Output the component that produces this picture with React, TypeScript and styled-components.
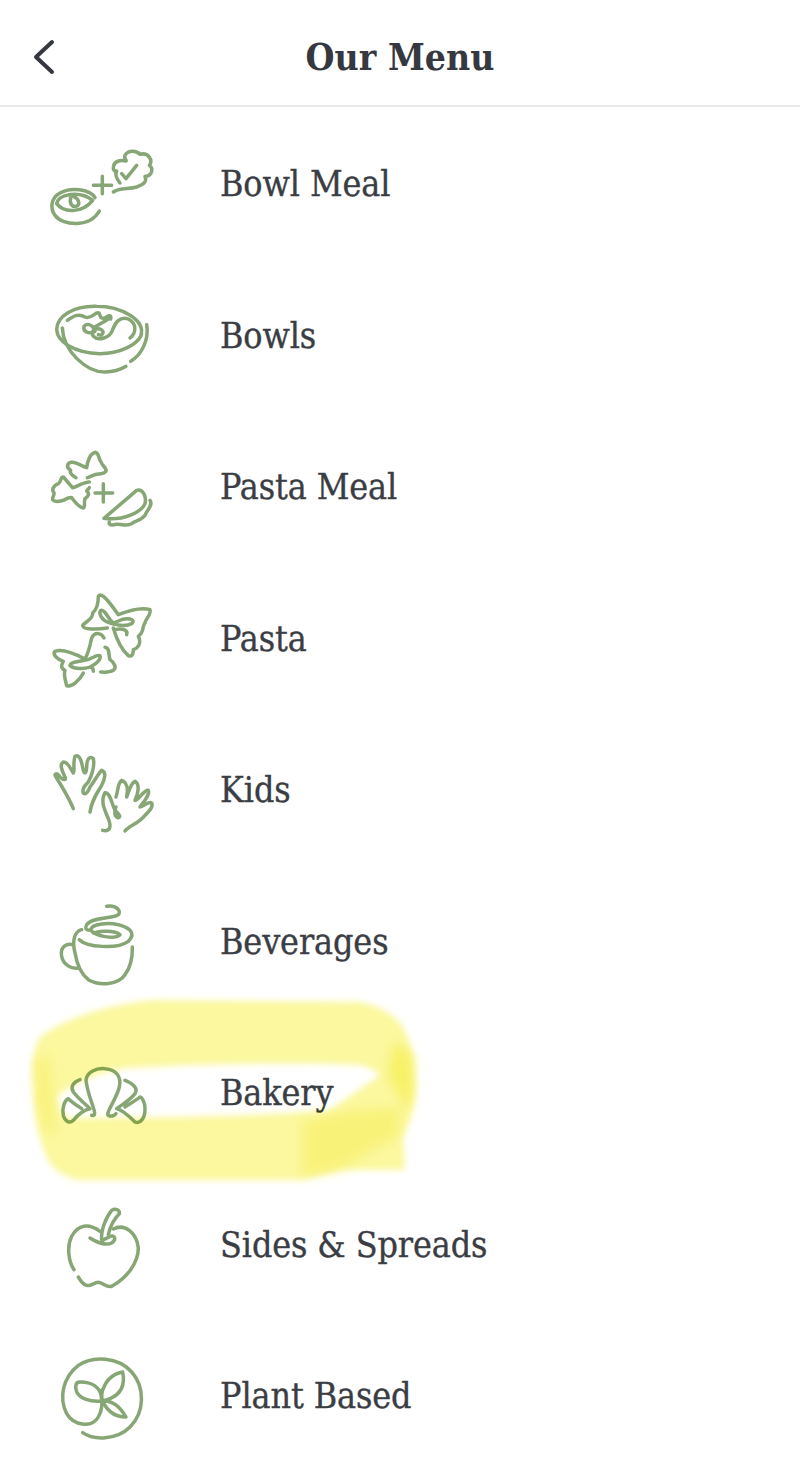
import React from 'react'
import styled, { createGlobalStyle } from 'styled-components'

const GlobalStyle = createGlobalStyle`
html, body {
    margin: 0;
    padding: 0;
    background: #ffffff;
}
`

type MenuItem = {
    name: string;
    viewBox: string;
    paths: string[];
}

// icon strokes are drawn on a 3x grid, the svg itself is 120x100
const menuItems: MenuItem[] = [
    {
        name: 'Bowl Meal',
        viewBox: '6 -22 360 300',
        paths: [
            'M165 172C150 145 90 140 60 158C35 172 28 200 45 225C70 258 150 262 178 212',
            'M50 190C55 160 120 150 158 180C130 215 75 222 50 190',
            'M92 172C88 190 95 200 108 198C122 195 118 175 100 168',
            'M160 135H215M187 108V160',
            'M220 155C240 140 265 148 290 140C310 133 322 125 315 108C335 108 342 85 328 75C340 60 325 35 300 42C290 30 265 28 255 45C250 55 262 60 258 62C240 58 222 62 220 80C218 90 228 95 230 92C222 105 232 118 240 128',
            'M245 100L258 115L290 75',
        ],
    },
    {
        name: 'Bowls',
        viewBox: '36 13 360 300',
        paths: [
            'M332 170C350 120 270 80 200 80C130 78 80 110 80 150C82 185 130 220 210 222C270 222 320 195 332 170',
            'M350 135C358 180 335 225 302 245',
            'M97 145C100 215 170 278 225 277C250 277 275 268 288 260',
            'M112 122C130 110 145 100 165 112C185 120 195 95 207 100C212 110 210 118 225 115C238 105 245 105 242 118',
            'M300 175C320 160 320 130 295 118C270 108 255 130 248 150C240 175 205 185 190 170C180 155 195 145 210 148C225 155 220 170 205 165',
            'M195 155C175 165 158 155 162 140C170 130 185 135 190 145C205 135 225 125 240 115',
        ],
    },
    {
        name: 'Pasta Meal',
        viewBox: '36 467 360 300',
        paths: [
            'M138 592C125 585 118 578 122 570C108 562 110 548 125 546C140 545 155 558 170 562C172 545 180 518 197 516C208 520 205 535 213 545C215 555 230 562 228 572C222 585 200 578 190 585C185 588 178 590 172 592',
            'M178 605C160 605 140 620 128 622C118 612 110 600 100 590C90 590 95 605 85 610C72 615 65 625 70 635C78 640 65 650 68 658C75 668 90 662 100 660C110 655 118 650 125 652C135 665 145 680 160 683C168 678 160 665 165 655C175 648 180 640 170 632C172 628 176 626 178 622',
            'M195 638H248M220 610V665',
            'M222 714L320 630C340 625 350 650 345 670C335 695 280 722 222 714',
            'M360 660C370 675 350 690 345 705C335 720 320 718 305 730C290 740 275 730 260 732C245 735 235 735 238 725',
        ],
    },
    {
        name: 'Pasta',
        viewBox: '36 22 360 300',
        paths: [
            'M232 145C200 150 160 150 158 138C165 125 190 120 188 100C200 90 205 70 205 50C215 35 240 70 265 105C290 95 330 80 360 90C365 105 345 120 345 130C335 140 345 155 325 170C335 190 325 205 310 210C310 225 305 232 295 228C275 210 260 180 250 145',
            'M250 130C235 120 225 88 212 92C205 100 215 122 235 128C255 135 285 142 305 132C320 118 290 112 265 124L250 130',
            'M255 150C275 145 295 150 290 165',
            'M222 175C215 160 195 155 185 175C180 200 175 220 165 238C140 225 100 205 75 215C65 225 85 240 100 245C95 255 90 265 105 272C100 285 105 295 110 318C125 325 150 300 160 280',
            'M190 275C190 268 188 262 180 262C195 255 215 240 210 228C200 222 185 240 165 242C145 245 120 248 120 258C135 270 165 268 180 262',
            'M225 203C240 205 235 225 240 240C255 250 260 265 250 272C240 278 225 278 212 277',
        ],
    },
    {
        name: 'Kids',
        viewBox: '36 476 360 300',
        paths: [
            'M130 685C120 660 100 625 78 590C70 580 80 575 90 590C100 600 110 600 105 590C95 570 88 550 100 545C115 545 125 570 130 578C135 575 128 545 135 528C150 520 155 545 160 570C165 585 170 575 170 560C170 535 180 525 190 535C195 560 185 585 175 605C165 615 155 625 160 638C170 645 175 630 180 620C195 600 205 580 215 570C230 575 225 595 215 615C200 640 185 660 180 695',
            'M285 752C295 738 325 730 345 705C360 690 370 680 365 668C355 660 340 680 330 680C340 665 360 645 355 630C345 625 320 665 315 660C325 640 330 610 315 603C300 610 295 640 290 650C295 625 290 605 275 600C262 610 265 630 258 650',
            'M218 750C240 755 245 740 235 715C225 690 210 665 225 637C240 635 245 670 255 690C265 700 275 710 265 712C255 710 250 695 258 680',
        ],
    },
    {
        name: 'Beverages',
        viewBox: '36 1 360 300',
        paths: [
            'M230 50C260 45 275 65 265 75C250 88 190 80 170 105C165 115 165 122 183 122',
            'M148 150C170 172 260 180 295 155C320 130 300 110 250 102C210 98 178 110 183 122C195 140 255 150 270 135C260 125 215 120 190 130',
            'M155 120C135 125 125 150 135 190C140 220 150 250 175 270C210 290 265 285 285 255C300 235 308 210 307 172',
            'M130 165C105 160 90 175 95 200C100 225 125 240 145 235',
        ],
    },
    {
        name: 'Bakery',
        viewBox: '96 185 360 300',
        paths: [
            'M245 405C270 410 235 360 228 300C230 275 260 262 285 265C320 268 335 290 328 320C320 355 285 400 295 405C305 410 315 405 318 400',
            'M210 298C190 305 180 320 190 335C205 355 225 370 240 385C225 388 210 395 190 420C180 430 165 425 160 405C155 380 165 360 175 355C185 365 200 375 215 385',
            'M345 300C370 310 385 325 375 340C360 360 340 370 320 385C340 390 360 410 375 425C390 432 405 415 405 385C405 365 395 350 390 350C375 362 360 370 345 380',
        ],
    },
    {
        name: 'Sides & Spreads',
        viewBox: '36 10 360 300',
        paths: [
            'M132 240C115 215 110 170 125 140C145 105 175 100 210 125',
            'M215 150C212 120 230 80 245 62C255 55 270 60 268 72C255 85 240 110 235 135',
            'M180 145C195 155 225 170 245 160C260 150 255 135 240 140C230 145 220 150 215 155',
            'M250 118C285 100 320 130 325 175C325 220 290 265 245 290C230 295 220 280 205 278C190 278 180 295 165 285C155 280 150 270 145 262',
        ],
    },
    {
        name: 'Plant Based',
        viewBox: '36 464 360 300',
        paths: [
            'M158 727C190 750 260 750 300 710C345 665 345 590 305 545C265 500 190 495 145 525C100 560 85 620 110 670C130 705 185 715 205 680C220 655 215 630 215 600',
            'M215 610C225 570 250 550 278 545C285 580 275 610 240 625C225 632 215 630 215 630',
            'M215 632C180 635 150 625 140 605C135 590 135 575 150 575C185 575 215 590 215 630',
            'M218 632C240 630 265 640 288 680C260 680 235 670 218 632',
        ],
    },
]

const App = () => {
    return (
        <Page>
            <GlobalStyle />
            <Header>
                <BackButton aria-label="Back">
                    <svg width="24" height="36" viewBox="0 0 24 36" fill="none">
                        <path d="M20 3L4 18L20 33" stroke="#35393f" strokeWidth="4" strokeLinecap="round" strokeLinejoin="round" />
                    </svg>
                </BackButton>
                <Title>Our Menu</Title>
            </Header>

            <MenuList>
                {menuItems.map((item) => (
                    <MenuRow key={item.name}>
                        <ItemIcon viewBox={item.viewBox} fill="none">
                            {item.paths.map((d) => <path key={d} d={d} />)}
                        </ItemIcon>
                        <ItemName>{item.name}</ItemName>
                    </MenuRow>
                ))}
            </MenuList>

            {/* marker scribble around one of the rows */}
            <Marker width="800" height="220" viewBox="0 980 800 220">
                <defs>
                    <filter id="marker-soft" x="-5%" y="-10%" width="110%" height="120%">
                        <feGaussianBlur stdDeviation="3" />
                    </filter>
                    <filter id="marker-wet" x="-20%" y="-20%" width="140%" height="140%">
                        <feGaussianBlur stdDeviation="6" />
                    </filter>
                </defs>
                <path
                    filter="url(#marker-soft)"
                    fill="#fbf89f"
                    fillRule="evenodd"
                    d="M40 1037C70 1015 110 1005 153 1000L360 1002C380 1006 395 1015 403 1027C412 1045 415 1060 415 1080C415 1095 414 1110 410 1120L403 1137L405 1170L343 1170L303 1180L77 1180C65 1176 56 1172 50 1163C42 1150 37 1130 35 1113L32 1070C33 1055 35 1045 40 1037ZM58 1095C80 1080 100 1072 127 1068C200 1064 290 1062 360 1065C368 1067 375 1070 380 1075L330 1110C280 1114 230 1116 177 1117L67 1118C60 1112 57 1102 58 1095Z"
                />
                <g filter="url(#marker-wet)">
                    <path fill="#f8f06a" opacity="0.7" d="M303 1122L345 1112L400 1108L398 1137L372 1150L343 1168L303 1176Z" />
                    <path fill="#f6ef55" opacity="0.8" d="M395 1042L412 1055L413 1090L408 1112L388 1074Z" />
                    <path fill="#f8f068" opacity="0.7" d="M36 1060L48 1055L52 1100L56 1135L45 1130L38 1105Z" />
                </g>
            </Marker>
        </Page>
    )
}

const Page = styled.div`
position: relative;
width: 800px;
min-height: 1478px;
background: #ffffff;
overflow: hidden;
`;

const Header = styled.header`
display: grid;
grid-template-columns: 1fr auto 1fr;
align-items: center;
box-sizing: border-box;
height: 107px;
padding: 8px 32px 0;
border-bottom: 2px solid #e9e9e9;
`;

const BackButton = styled.button`
display: flex;
align-items: center;
padding: 0;
border: 0;
background: none;
`;

const Title = styled.h1`
margin: 0;
font-family: "DejaVu Serif Condensed", "DejaVu Serif", serif;
font-size: 37px;
font-weight: 700;
color: #35393f;
`;

const MenuList = styled.ul`
margin: 0;
padding: 0;
list-style: none;
`;

const MenuRow = styled.li`
display: flex;
align-items: center;
gap: 58px;
height: 151.5px;
padding-left: 42px;
`;

const ItemIcon = styled.svg`
flex: none;
width: 120px;
height: 100px;
overflow: visible;

path {
    stroke: #87a675;
    stroke-width: 10.5;
    stroke-linecap: round;
    stroke-linejoin: round;
}
`;

const ItemName = styled.span`
padding-top: 2px;
font-family: "DejaVu Serif Condensed", "DejaVu Serif", serif;
font-size: 35.5px;
letter-spacing: -0.1px;
color: #3a3d43;
-webkit-text-stroke: 0.35px #3a3d43;
`;

const Marker = styled.svg`
position: absolute;
left: 0;
top: 980px;
mix-blend-mode: multiply;
pointer-events: none;
`;

export default App
